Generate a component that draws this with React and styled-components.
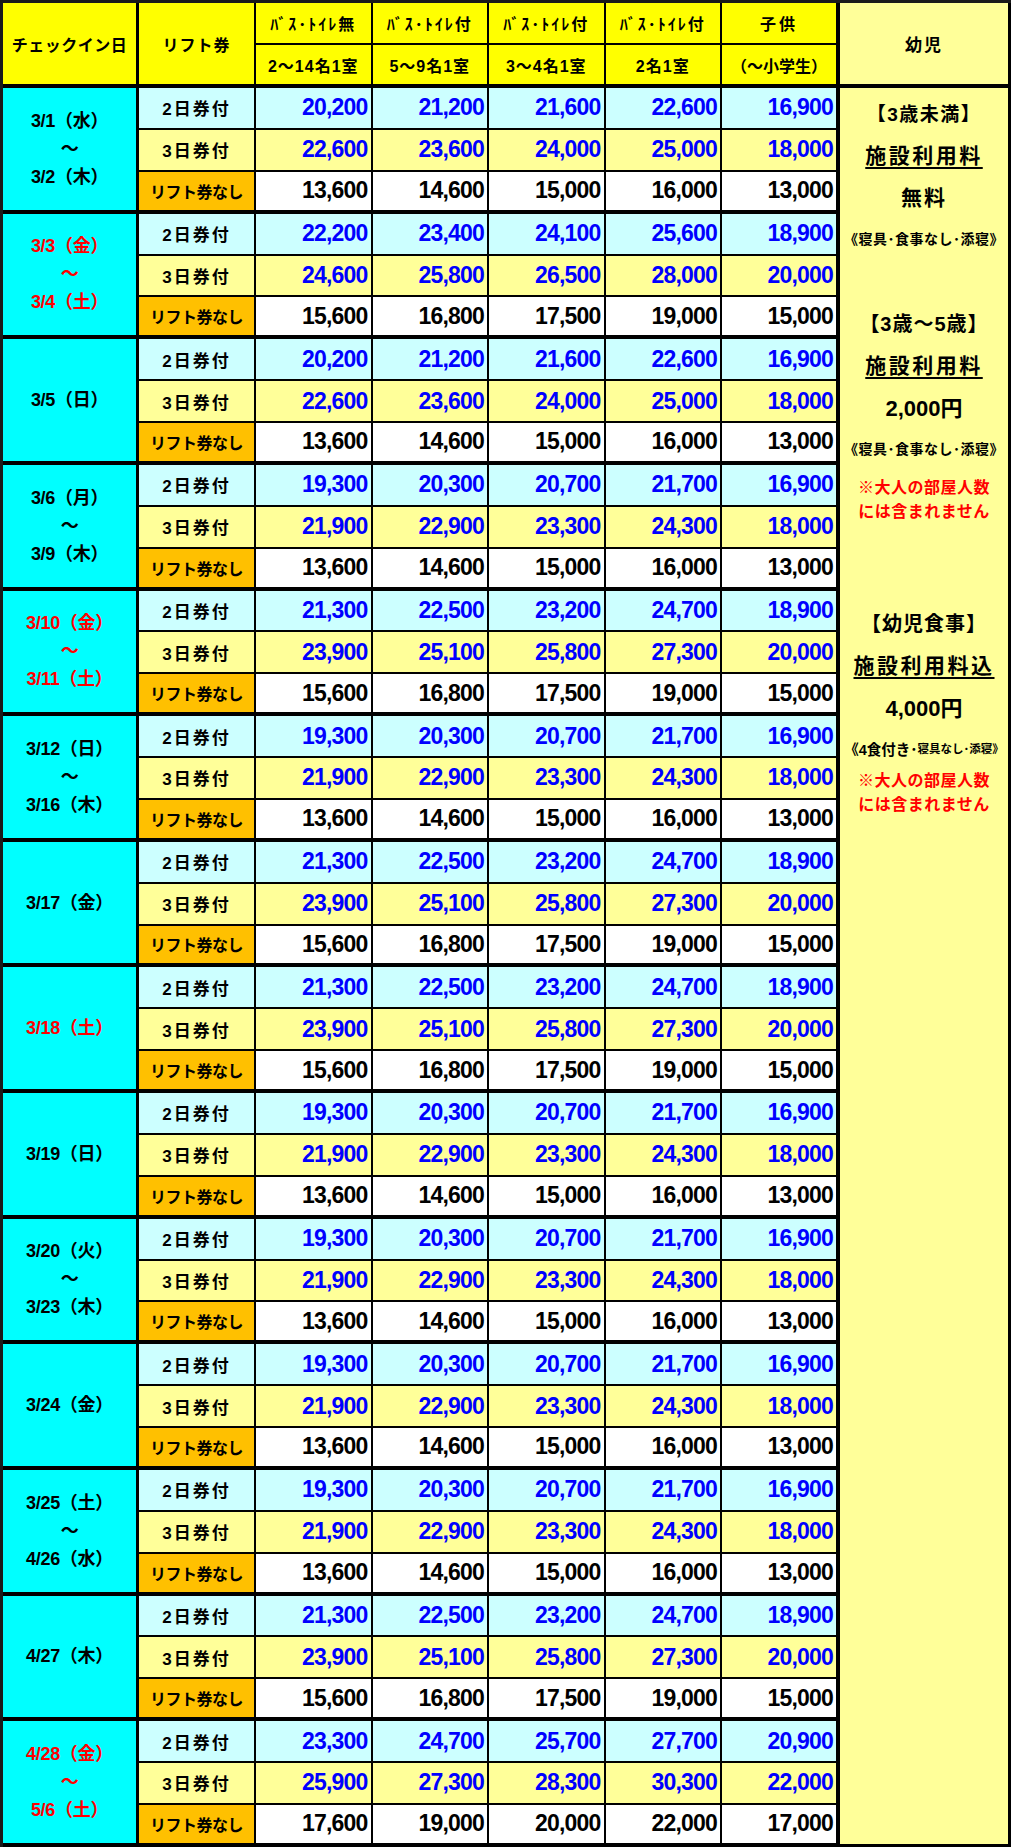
import React from "react";
import styled, { createGlobalStyle } from "styled-components";

const GlobalStyle = createGlobalStyle`
  html, body { margin: 0; padding: 0; background: #ffffff; }
  body {
    font-family: "Liberation Sans", "Noto Sans CJK JP", sans-serif;
    font-weight: 700;
    color: #000;
  }
  *, *::before, *::after { box-sizing: border-box; }
`;

const Table = styled.table`
  border-collapse: separate;
  border-spacing: 0;
  table-layout: fixed;
  width: 1011px;
  border-top: 3px solid #1a1a1a;
  border-left: 3px solid #1a1a1a;
`;

const HeadRow = styled.tr`
  height: ${(p) => p.$h}px;
`;

const DataRow = styled.tr`
  height: 41.88px;
`;

const HeadCell = styled.th`
  padding: 0;
  background: #ffff00;
  border-right: ${(p) => p.$br ?? 2}px solid #000;
  border-bottom: ${(p) => p.$bb ?? 2}px solid #000;
  font-size: 16px;
  font-weight: 700;
  letter-spacing: ${(p) => p.$ls ?? 0.5}px;
  text-align: center;
  vertical-align: middle;
  white-space: nowrap;
`;

const InfantHead = styled.th`
  padding: 0;
  background: #ffff99;
  border-right: 3px solid #000;
  border-bottom: 4px solid #000;
  font-size: 17px;
  font-weight: 700;
  letter-spacing: 2px;
  text-align: center;
  vertical-align: middle;
`;

const DateCell = styled.td`
  padding: 0;
  background: #00ffff;
  border-right: 3px solid #000;
  border-bottom: 4px solid #000;
  color: ${(p) => (p.$red ? "#ff0000" : "#000")};
  font-size: 18px;
  text-align: center;
  vertical-align: middle;
`;

const DateLine = styled.div`
  line-height: 28px;
  white-space: nowrap;
  letter-spacing: -0.3px;
`;

const rowBg = {
  two: "#ccffff",
  three: "#ffff99",
  none: "#ffffff",
};

const TicketCell = styled.td`
  padding: 0;
  background: ${(p) => (p.$kind === "none" ? "#ffc000" : rowBg[p.$kind])};
  border-right: 2px solid #000;
  border-bottom: ${(p) => (p.$end ? 4 : 2)}px solid #000;
  font-size: ${(p) => (p.$kind === "none" ? 16 : 17)}px;
  letter-spacing: ${(p) => (p.$kind === "none" ? -0.5 : 2)}px;
  text-align: center;
  vertical-align: middle;
  white-space: nowrap;
`;

const PriceCell = styled.td`
  padding: 0 3px 0 0;
  background: ${(p) => rowBg[p.$kind]};
  border-right: ${(p) => (p.$last ? 4 : 2)}px solid #000;
  border-bottom: ${(p) => (p.$end ? 4 : 2)}px solid #000;
  color: ${(p) => (p.$kind === "none" ? "#000" : "#0000ff")};
  font-family: "Liberation Sans", Arial, sans-serif;
  font-size: 23px;
  letter-spacing: -0.8px;
  text-align: right;
  vertical-align: middle;
  white-space: nowrap;
`;

const InfantCell = styled.td`
  padding: 3px 0 0 0;
  background: #ffff99;
  border-right: 3px solid #000;
  border-bottom: 3px solid #000;
  vertical-align: top;
`;

const InfoStack = styled.div`
  display: flex;
  flex-direction: column;
  align-items: center;
`;

const InfoLine = styled.div`
  height: 42px;
  display: flex;
  align-items: center;
  justify-content: center;
  white-space: nowrap;
  font-size: ${(p) => p.$size ?? 19}px;
  letter-spacing: ${(p) => p.$ls ?? 1}px;
  text-decoration: ${(p) => (p.$under ? "underline" : "none")};
  text-decoration-thickness: 2px;
  text-underline-offset: 4px;
`;

const Small = styled.span`
  font-size: ${(p) => p.$size}px;
  letter-spacing: 0;
`;

const Spacer = styled.div`
  height: ${(p) => p.$h}px;
`;

const Note = styled.div`
  margin-top: ${(p) => p.$mt ?? 0}px;
  color: #ff0000;
  font-size: 16px;
  line-height: 24px;
  letter-spacing: 0.5px;
  text-align: center;
  white-space: nowrap;
`;

const A = [
  [20200, 21200, 21600, 22600, 16900],
  [22600, 23600, 24000, 25000, 18000],
  [13600, 14600, 15000, 16000, 13000],
];
const B = [
  [19300, 20300, 20700, 21700, 16900],
  [21900, 22900, 23300, 24300, 18000],
  [13600, 14600, 15000, 16000, 13000],
];
const C = [
  [21300, 22500, 23200, 24700, 18900],
  [23900, 25100, 25800, 27300, 20000],
  [15600, 16800, 17500, 19000, 15000],
];
const D = [
  [22200, 23400, 24100, 25600, 18900],
  [24600, 25800, 26500, 28000, 20000],
  [15600, 16800, 17500, 19000, 15000],
];
const E = [
  [23300, 24700, 25700, 27700, 20900],
  [25900, 27300, 28300, 30300, 22000],
  [17600, 19000, 20000, 22000, 17000],
];

const groups = [
  { dates: ["3/1（水）", "～", "3/2（木）"], p: A },
  { dates: ["3/3（金）", "～", "3/4（土）"], red: true, p: D },
  { dates: ["3/5（日）"], p: A },
  { dates: ["3/6（月）", "～", "3/9（木）"], p: B },
  { dates: ["3/10（金）", "～", "3/11（土）"], red: true, p: C },
  { dates: ["3/12（日）", "～", "3/16（木）"], p: B },
  { dates: ["3/17（金）"], p: C },
  { dates: ["3/18（土）"], red: true, p: C },
  { dates: ["3/19（日）"], p: B },
  { dates: ["3/20（火）", "～", "3/23（木）"], p: B },
  { dates: ["3/24（金）"], p: B },
  { dates: ["3/25（土）", "～", "4/26（水）"], p: B },
  { dates: ["4/27（木）"], p: C },
  { dates: ["4/28（金）", "～", "5/6（土）"], red: true, p: E },
];

const tickets = [
  { kind: "two", label: "2日券付" },
  { kind: "three", label: "3日券付" },
  { kind: "none", label: "リフト券なし" },
];

const fmt = (n) => n.toLocaleString("en-US");

function InfantInfo() {
  return (
    <InfoStack>
      <InfoLine $size={19} $ls={1.5}>【3歳未満】</InfoLine>
      <InfoLine $size={21} $ls={2.5} $under>施設利用料</InfoLine>
      <InfoLine $size={21} $ls={2}>無料</InfoLine>
      <InfoLine $size={14} $ls={0.5}>《寝具･食事なし･添寝》</InfoLine>
      <Spacer $h={42} />
      <InfoLine $size={20} $ls={1}>【3歳～5歳】</InfoLine>
      <InfoLine $size={21} $ls={2.5} $under>施設利用料</InfoLine>
      <InfoLine $size={22} $ls={0}>2,000円</InfoLine>
      <InfoLine $size={14} $ls={0.5}>《寝具･食事なし･添寝》</InfoLine>
      <Note $mt={7}>
        ※大人の部屋人数
        <br />
        には含まれません
      </Note>
      <Spacer $h={77} />
      <InfoLine $size={20} $ls={1}>【幼児食事】</InfoLine>
      <InfoLine $size={21} $ls={2.5} $under>施設利用料込</InfoLine>
      <InfoLine $size={22} $ls={0}>4,000円</InfoLine>
      <InfoLine $size={14.5} $ls={0}>
        《4食付き･<Small $size={11.5}>寝具なし･添寝》</Small>
      </InfoLine>
      <Note>
        ※大人の部屋人数
        <br />
        には含まれません
      </Note>
    </InfoStack>
  );
}

export default function App() {
  const totalRows = groups.length * 3;
  return (
    <>
      <GlobalStyle />
      <Table>
        <colgroup>
          <col style={{ width: 136 }} />
          <col style={{ width: 117 }} />
          <col style={{ width: 116.5 }} />
          <col style={{ width: 116.5 }} />
          <col style={{ width: 116.5 }} />
          <col style={{ width: 116.5 }} />
          <col style={{ width: 118 }} />
          <col style={{ width: 171 }} />
        </colgroup>
        <thead>
          <HeadRow $h={42}>
            <HeadCell rowSpan={2} $br={3} $bb={4}>
              チェックイン日
            </HeadCell>
            <HeadCell rowSpan={2} $bb={4} $ls={1}>
              リフト券
            </HeadCell>
            <HeadCell $ls={2}>ﾊﾞｽ･ﾄｲﾚ無</HeadCell>
            <HeadCell $ls={2}>ﾊﾞｽ･ﾄｲﾚ付</HeadCell>
            <HeadCell $ls={2}>ﾊﾞｽ･ﾄｲﾚ付</HeadCell>
            <HeadCell $ls={2}>ﾊﾞｽ･ﾄｲﾚ付</HeadCell>
            <HeadCell $br={4} $ls={3}>
              子供
            </HeadCell>
            <InfantHead rowSpan={2}>幼児</InfantHead>
          </HeadRow>
          <HeadRow $h={43}>
            <HeadCell $bb={4} $ls={1}>2～14名1室</HeadCell>
            <HeadCell $bb={4} $ls={1}>5～9名1室</HeadCell>
            <HeadCell $bb={4} $ls={1}>3～4名1室</HeadCell>
            <HeadCell $bb={4} $ls={1}>2名1室</HeadCell>
            <HeadCell $bb={4} $br={4} $ls={0}>
              （～小学生）
            </HeadCell>
          </HeadRow>
        </thead>
        <tbody>
          {groups.map((g, gi) =>
            tickets.map((t, ri) => {
              const end = ri === 2;
              return (
                <DataRow key={`${gi}-${ri}`}>
                  {ri === 0 && (
                    <DateCell rowSpan={3} $red={g.red}>
                      {g.dates.map((d, di) => (
                        <DateLine key={di}>{d}</DateLine>
                      ))}
                    </DateCell>
                  )}
                  <TicketCell $kind={t.kind} $end={end}>
                    {t.label}
                  </TicketCell>
                  {g.p[ri].map((v, vi) => (
                    <PriceCell key={vi} $kind={t.kind} $end={end} $last={vi === 4}>
                      {fmt(v)}
                    </PriceCell>
                  ))}
                  {gi === 0 && ri === 0 && (
                    <InfantCell rowSpan={totalRows}>
                      <InfantInfo />
                    </InfantCell>
                  )}
                </DataRow>
              );
            })
          )}
        </tbody>
      </Table>
    </>
  );
}
